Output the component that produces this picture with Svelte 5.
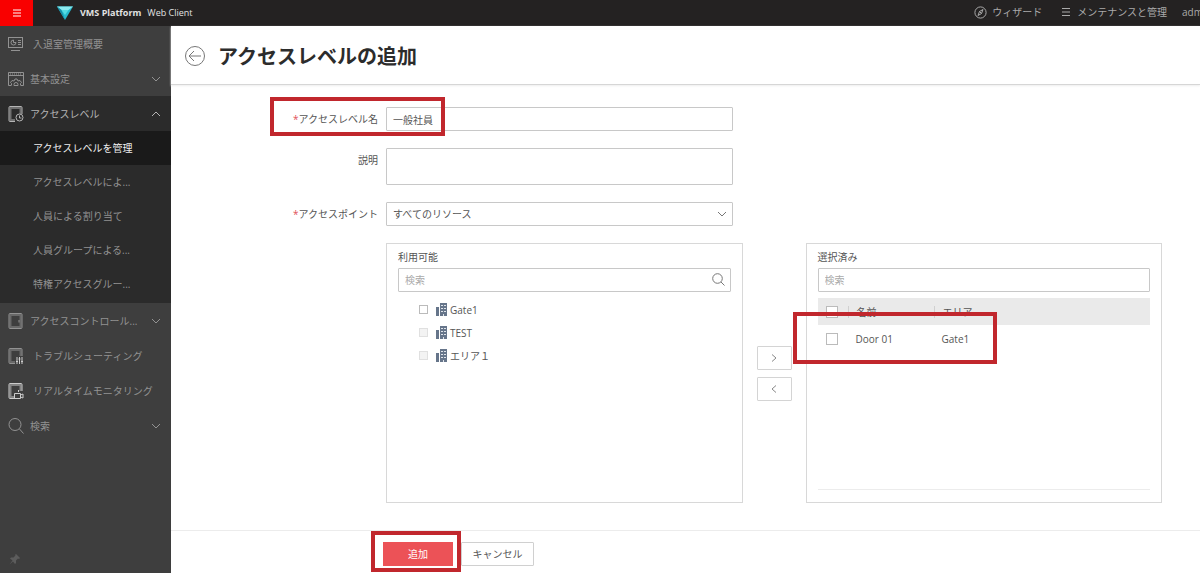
<script lang="ts">
  let name = $state('一般社員');
  let description = $state('');
  let resource = $state('すべてのリソース');

  const subItems = [
    { label: 'アクセスレベルを管理', active: true },
    { label: 'アクセスレベルによ...', active: false },
    { label: '人員による割り当て', active: false },
    { label: '人員グループによる...', active: false },
    { label: '特権アクセスグルー...', active: false }
  ];

  const areas = [
    { label: 'Gate1', disabled: false },
    { label: 'TEST', disabled: true },
    { label: 'エリア１', disabled: true }
  ];

  const selected = [{ name: 'Door 01', area: 'Gate1' }];
</script>

{#snippet chevron(up: boolean)}
  <svg class="chevron" viewBox="0 0 10 10" width="10" height="10" aria-hidden="true">
    <path d={up ? 'M1 7l4-4 4 4' : 'M1 3l4 4 4-4'} />
  </svg>
{/snippet}

{#snippet doorFrame()}
  <path stroke-width="2" opacity="0.5" d="M7 14H2.500V2h10v6" />
  <path d="M7 15.500H2q-1 0-1-1v-13q0-1 1-1h11q1 0 1 1V8" />
{/snippet}

<div class="app">
  <header class="topbar">
    <button class="menu" aria-label="Menu">
      <svg viewBox="0 0 8 8" width="8" height="8"><path d="M0 1h8M0 4h8M0 7h8" /></svg>
    </button>
    <div class="brand">
      <svg viewBox="0 0 16 14" width="16" height="14" aria-hidden="true">
        <path fill="#27b9cc" d="M0 0.500h16L8 14z" />
        <path fill="#8be9ee" d="M0 0.500h16l-4.500 3.500h-7z" />
        <path fill="#168ea8" d="M4.500 4L8 14 0 0.500z" />
        <path fill="#54dbe3" d="M4.500 4h7L8 9z" />
      </svg>
      <strong>VMS Platform</strong>
      <span>Web Client</span>
    </div>
    <nav class="tools">
      <a href="#wizard">
        <svg viewBox="0 0 13 13" width="13" height="13" aria-hidden="true">
          <circle cx="6.500" cy="6.500" r="5.600" />
          <path d="M9 3.500L7.500 7.500 4 9.500 5.500 5.500zM5.500 5.500l2 2" />
        </svg>
        ウィザード
      </a>
      <a href="#maintenance">
        <svg class="lines" viewBox="0 0 8 8" width="8" height="8" aria-hidden="true"><path d="M0 0.500h8M0 4h8M0 7.500h8" /></svg>
        メンテナンスと管理
      </a>
      <a class="account" href="#account">admin</a>
    </nav>
  </header>

  <div class="body">
    <nav class="sidebar">
      <a class="item plain" href="#overview">
        <svg viewBox="0 0 16 16" width="16" height="16" aria-hidden="true">
          <rect x="0.500" y="1.500" width="14" height="10" />
          <path d="M3 14.500h9" />
          <path d="M5.500 4v2.500H8A2.500 2.500 0 1 1 5.500 4M10 4.500h3M10 6.500h3M10 8.500h3" />
        </svg>
        <span>入退室管理概要</span>
      </a>
      <button class="item">
        <svg viewBox="0 0 16 16" width="16" height="16" aria-hidden="true">
          <path d="M3 14.500H0.500v-13h15v13H13M0.500 4.500h15" />
          <path stroke-dasharray="1 1" d="M2 3h12" />
          <path d="M3.500 14.500v-2l-1-1 1.500-2 2 0.500 1-2h2l1 2 2-0.500 1.500 2-1 1v2" />
          <path d="M6 14.500v-1q0-2 2-2t2 2v1z" />
        </svg>
        <span>基本設定</span>
        {@render chevron(false)}
      </button>
      <div class="group">
        <button class="item" aria-expanded="true">
          <svg viewBox="0 0 16 16" width="16" height="16" aria-hidden="true">
            {@render doorFrame()}
            <circle cx="11.500" cy="11.500" r="3.500" fill="#2b2b2b" />
            <path d="M11.500 9.500v2.500h2" />
          </svg>
          <span>アクセスレベル</span>
          {@render chevron(true)}
        </button>
        {#each subItems as item}
          <a class="sub" class:active={item.active} href="#level">{item.label}</a>
        {/each}
      </div>
      <button class="item">
        <svg viewBox="0 0 16 16" width="16" height="16" aria-hidden="true">
          <rect x="2.500" y="2" width="10" height="12" stroke-width="2" opacity="0.5" />
          <rect x="1" y="0.500" width="13" height="15" rx="1" />
          <path d="M11 7v2.500" />
        </svg>
        <span>アクセスコントロール...</span>
        {@render chevron(false)}
      </button>
      <a class="item plain" href="#trouble">
        <svg viewBox="0 0 16 16" width="16" height="16" aria-hidden="true">
          {@render doorFrame()}
          <g class="bright"><path d="M9 9v7M11.500 9v7M14 9v7M8 13.500h2M10.500 11h2M13 13.500h2" /></g>
        </svg>
        <span>トラブルシューティング</span>
      </a>
      <a class="item plain" href="#monitoring">
        <svg class="bright" viewBox="0 0 16 16" width="16" height="16" aria-hidden="true">
          {@render doorFrame()}
          <path d="M6.500 10.500h6v5h-6zM12.500 12l2.500-1v4l-2.500-1M10.500 7v2" />
        </svg>
        <span>リアルタイムモニタリング</span>
      </a>
      <button class="item">
        <svg viewBox="0 0 16 16" width="16" height="16" aria-hidden="true">
          <circle cx="7" cy="6.500" r="6" />
          <path d="M11.500 11l4 4.500" />
        </svg>
        <span>検索</span>
        {@render chevron(false)}
      </button>
      <button class="pin" aria-label="Pin">
        <svg viewBox="0 0 12 12" width="12" height="12"><path d="M7 1l4 4-1 1-1-0.500-2 2V10L6 11 4 8.500 0.500 11.500 3.500 7.500 1 5.500 2 4.500h2.500l2-2L6 2z" /></svg>
      </button>
    </nav>

    <main>
      <div class="title">
        <button class="back" aria-label="Back">
          <svg viewBox="0 0 20 20" width="20" height="20">
            <circle cx="10" cy="10" r="9.500" />
            <path d="M16 10H4.500M9 5l-5 5 5 5" />
          </svg>
        </button>
        <h1>アクセスレベルの追加</h1>
      </div>

      <form id="level-form" onsubmit={(e) => e.preventDefault()}>
        <label for="name"><i>*</i>アクセスレベル名</label>
        <div class="control">
          <input id="name" type="text" bind:value={name} />
          <span class="mark mark-name"></span>
        </div>

        <label for="description">説明</label>
        <div class="control">
          <textarea id="description" bind:value={description}></textarea>
        </div>

        <label for="resource"><i>*</i>アクセスポイント</label>
        <div class="control">
          <select id="resource" bind:value={resource}>
            <option>すべてのリソース</option>
          </select>
          {@render chevron(false)}
        </div>

        <div class="transfer">
          <section class="panel">
            <label for="search-available">利用可能</label>
            <div class="search">
              <input id="search-available" type="text" placeholder="検索" />
              <svg viewBox="0 0 13 13" width="13" height="13" aria-hidden="true">
                <circle cx="5.500" cy="5.500" r="4.800" />
                <path d="M9 9l3.500 3.500" />
              </svg>
            </div>
            <ul>
              {#each areas as area}
                <li>
                  <label>
                    <input type="checkbox" disabled={area.disabled} />
                    <svg viewBox="0 0 11 13" width="11" height="13" aria-hidden="true">
                      <path fill="#66758a" d="M0 4h3v9H0zM4 0h7v13H4z" />
                      <path fill="#dfe4ea" d="M5 2h2v1H5zM8 2h2v1H8zM5 5h2v1H5zM8 5h2v1H8zM5 8h2v1H5zM8 8h2v1H8zM7 11h1v2H7z" />
                    </svg>
                    {area.label}
                  </label>
                </li>
              {/each}
            </ul>
          </section>

          <div class="moves">
            <button type="button" aria-label="Add to selected">
              <svg viewBox="0 0 8 8" width="8" height="8"><path d="M2 0.500L6 4 2 7.500" /></svg>
            </button>
            <button type="button" aria-label="Remove from selected">
              <svg viewBox="0 0 8 8" width="8" height="8"><path d="M6 0.500L2 4l4 3.500" /></svg>
            </button>
          </div>

          <section class="panel">
            <label for="search-selected">選択済み</label>
            <div class="search">
              <input id="search-selected" type="text" placeholder="検索" />
            </div>
            <div class="list">
              <table>
                <thead>
                  <tr>
                    <th class="check"><input type="checkbox" aria-label="Select all" /></th>
                    <th class="name"><span>名前</span></th>
                    <th><span>エリア</span></th>
                  </tr>
                </thead>
                <tbody>
                  {#each selected as row}
                    <tr>
                      <td class="check"><input type="checkbox" aria-label={row.name} /></td>
                      <td>{row.name}</td>
                      <td>{row.area}</td>
                    </tr>
                  {/each}
                </tbody>
              </table>
              <span class="mark mark-row"></span>
            </div>
          </section>
        </div>
      </form>

      <footer>
        <div class="submit">
          <button class="primary" form="level-form">追加</button>
          <span class="mark mark-submit"></span>
        </div>
        <button class="cancel">キャンセル</button>
      </footer>
    </main>
  </div>
</div>

<style>
  :global(body) {
    margin: 0;
    background: #fff;
  }

  .app {
    display: flex;
    flex-direction: column;
    min-height: 100vh;
    font-family: 'Open Sans', 'Noto Sans CJK JP', sans-serif;
    font-size: 10px;
    line-height: 16px;
    color: #555;
  }

  button,
  input,
  textarea,
  select {
    box-sizing: border-box;
    margin: 0;
    font: inherit;
    color: inherit;
  }

  button {
    padding: 0;
    border: 0;
    background: none;
  }

  a {
    color: inherit;
    text-decoration: none;
  }

  svg {
    display: block;
    flex: none;
    fill: none;
    stroke: currentColor;
  }

  .topbar {
    display: flex;
    align-items: center;
    height: 26px;
    background: #242222;
    overflow: hidden;
    white-space: nowrap;
  }

  .menu {
    display: grid;
    place-items: center;
    align-self: stretch;
    width: 33px;
    background: #f90000;
    color: #fff;
  }

  .brand {
    display: flex;
    align-items: center;
    gap: 6px;
    padding-left: 24px;
    font-size: 9px;
    color: #e2e2e2;
  }

  .brand svg {
    margin-right: 1px;
    stroke: none;
  }

  .tools {
    display: flex;
    align-items: center;
    margin-left: auto;
    padding-bottom: 2px;
    color: #aaa;
  }

  .tools a {
    display: flex;
    align-items: center;
    gap: 5px;
    margin-right: 20px;
  }

  .tools .lines {
    margin-right: 2px;
  }

  .tools .account {
    width: 18px;
    margin: 0 0 0 -5px;
    overflow: hidden;
  }

  .body {
    display: flex;
    flex: 1;
  }

  .sidebar {
    display: flex;
    flex: none;
    flex-direction: column;
    width: 171px;
    background: #3e3e3e;
    color: #929292;
  }

  .item {
    display: flex;
    align-items: center;
    gap: 6px;
    height: 35px;
    padding: 0 10px 0 8px;
    text-align: left;
    white-space: nowrap;
  }

  .item.plain {
    gap: 9px;
  }

  .item .chevron {
    margin-left: auto;
  }

  .bright {
    stroke: #ccc;
  }

  .group {
    padding-bottom: 2px;
    background: #2b2b2b;
  }

  .group .item {
    width: 100%;
    color: #b4b4b4;
  }

  .sub {
    display: block;
    padding: 9px 0 9px 33px;
  }

  .sub.active {
    background: #1a1a1a;
    color: #eee;
  }

  .pin {
    margin: auto 0 8px 9px;
    width: 12px;
    color: #5c5c5c;
  }

  .pin svg {
    fill: currentColor;
    stroke: none;
  }

  main {
    display: flex;
    flex: 1;
    flex-direction: column;
    min-width: 0;
  }

  .title {
    display: flex;
    align-items: center;
    gap: 13px;
    box-sizing: border-box;
    height: 59px;
    padding: 2px 0 0 14px;
    border-bottom: 1px solid #d6d6d6;
    box-shadow: 0 1px 2px #eee;
  }

  .back {
    color: #777;
  }

  h1 {
    margin: 0;
    padding-top: 2px;
    font-size: 20px;
    line-height: 28px;
    color: #2c2c2c;
  }

  form {
    display: grid;
    flex: 1;
    grid-template: auto auto auto 1fr / 207px 1fr;
    gap: 17px 8px;
    padding: 22px 38px 27px 0;
  }

  form > label {
    padding-top: 4px;
    text-align: right;
  }

  form i {
    font-style: normal;
    color: #e05058;
  }

  .control,
  .search,
  .list,
  .submit {
    position: relative;
  }

  .control {
    max-width: 347px;
  }

  input[type='text'],
  textarea,
  select {
    display: block;
    width: 100%;
    height: 24px;
    padding: 0 6px;
    border: 1px solid #c8c8c8;
    border-radius: 1px;
    background: #fff;
    appearance: none;
    outline: none;
  }

  textarea {
    height: 37px;
    resize: none;
  }

  ::placeholder {
    color: #aaa;
    opacity: 1;
  }

  .control .chevron,
  .search svg {
    position: absolute;
    top: 7px;
    right: 6px;
    color: #777;
    pointer-events: none;
  }

  .search svg {
    top: 5px;
  }

  .transfer {
    display: grid;
    grid-column: 2;
    grid-template-columns: 1fr 35px 1fr;
    gap: 14px;
  }

  .panel {
    display: flex;
    flex-direction: column;
    padding: 5px 11px 12px;
    border: 1px solid #d8d8d8;
  }

  .panel > label {
    padding-bottom: 3px;
  }

  ul {
    margin: 6px 0 0;
    padding: 0 0 0 21px;
    list-style: none;
  }

  li label {
    display: flex;
    align-items: center;
    gap: 3px;
    height: 23px;
  }

  input[type='checkbox'] {
    display: block;
    width: 12px;
    height: 12px;
    border: 1px solid #bbb;
    background: #fff;
    appearance: none;
  }

  li input[type='checkbox'] {
    width: 9px;
    height: 9px;
    margin-right: 5px;
  }

  input[type='checkbox']:disabled {
    border-color: #e0e0e0;
    background: #f3f3f3;
  }

  li svg {
    stroke: none;
  }

  .moves {
    display: flex;
    flex-direction: column;
    justify-content: center;
    gap: 7px;
  }

  .moves button {
    display: grid;
    place-items: center;
    height: 24px;
    border: 1px solid #d4d4d4;
    border-radius: 1px;
    color: #888;
  }

  .list {
    flex: 1;
    margin-top: 6px;
    border-bottom: 1px solid #ececec;
  }

  table {
    width: 100%;
    border-collapse: collapse;
    table-layout: fixed;
    text-align: left;
  }

  th,
  td {
    height: 27px;
    padding: 0 0 0 8px;
    font-weight: 400;
  }

  thead {
    background: #eaeaea;
  }

  th span {
    display: block;
    margin-left: -8px;
    padding-left: 8px;
    border-left: 1px solid #d0d0d0;
    line-height: 12px;
  }

  .check {
    width: 22px;
  }

  .name {
    width: 78px;
  }

  footer {
    display: flex;
    align-items: flex-start;
    gap: 8px;
    height: 31px;
    padding: 11px 0 0 212px;
    border-top: 1px solid #ececec;
  }

  footer button {
    display: block;
    height: 24px;
  }

  .primary {
    width: 70px;
    background: #ec5257;
    color: #fff;
  }

  .cancel {
    width: 73px;
    border: 1px solid #d0d0d0;
    border-radius: 1px;
  }

  .mark {
    position: absolute;
    box-sizing: border-box;
    border: 4px solid #c1272d;
    pointer-events: none;
  }

  .mark-name {
    top: -10px;
    left: -116px;
    width: 175px;
    height: 39px;
  }

  .mark-row {
    top: 14px;
    left: -25px;
    width: 204px;
    height: 52px;
  }

  .mark-submit {
    inset: -11px -8px -6px -12px;
  }
</style>
